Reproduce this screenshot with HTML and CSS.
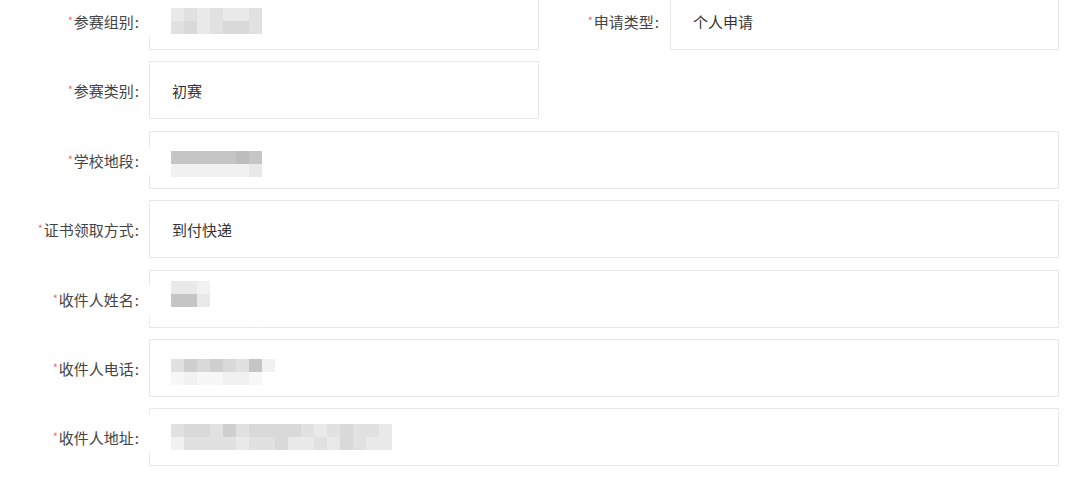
FILE: index.html
```html
<!DOCTYPE html>
<html lang="zh-CN">
<head>
<meta charset="utf-8">
<title>报名信息</title>
<link rel="stylesheet" href="styles.css">
</head>
<body>
<div class="form">
  <div class="row">
    <div class="field first">
      <label class="lbl"><span class="req">*</span>参赛组别<span class="colon">:</span></label>
      <div class="box blobbed b1">
        <div class="mosaic c7">
          <i class="s2"></i><i class="s3"></i><i class="s2"></i><i class="s3"></i><i class="s2"></i><i class="s2"></i><i class="s3"></i>
          <i class="s3"></i><i class="s4"></i><i class="s2"></i><i class="s3"></i><i class="s4"></i><i class="s4"></i><i class="s3"></i>
        </div>
      </div>
    </div>
    <div class="field second">
      <label class="lbl"><span class="req">*</span>申请类型<span class="colon">:</span></label>
      <div class="box">个人申请</div>
    </div>
  </div>

  <div class="row">
    <div class="field first">
      <label class="lbl"><span class="req">*</span>参赛类别<span class="colon">:</span></label>
      <div class="box">初赛</div>
    </div>
  </div>

  <div class="row">
    <div class="field full">
      <label class="lbl"><span class="req">*</span>学校地段<span class="colon">:</span></label>
      <div class="box blobbed b3">
        <div class="mosaic c7 down">
          <i class="s6"></i><i class="s6"></i><i class="s6"></i><i class="s6"></i><i class="s6"></i><i class="s7"></i><i class="s6"></i>
          <i class="s1"></i><i class="s1"></i><i class="s1"></i><i class="s1"></i><i class="s1"></i><i class="s1"></i><i class="s2"></i>
        </div>
      </div>
    </div>
  </div>

  <div class="row">
    <div class="field full">
      <label class="lbl"><span class="req">*</span>证书领取方式<span class="colon">:</span></label>
      <div class="box">到付快递</div>
    </div>
  </div>

  <div class="row">
    <div class="field full">
      <label class="lbl"><span class="req">*</span>收件人姓名<span class="colon">:</span></label>
      <div class="box blobbed b5">
        <div class="mosaic c3 up">
          <i class="s2"></i><i class="s2"></i><i class="s1"></i>
          <i class="s6"></i><i class="s6"></i><i class="s2"></i>
        </div>
      </div>
    </div>
  </div>

  <div class="row">
    <div class="field full">
      <label class="lbl"><span class="req">*</span>收件人电话<span class="colon">:</span></label>
      <div class="box blobbed b6">
        <div class="mosaic c8 down">
          <i class="s3"></i><i class="s5"></i><i class="s4"></i><i class="s5"></i><i class="s4"></i><i class="s3"></i><i class="s6"></i><i class="s1"></i>
          <i class="s0"></i><i class="s1"></i><i class="s0"></i><i class="s0"></i><i class="s1"></i><i class="s1"></i><i class="s0"></i><i class="sw"></i>
        </div>
      </div>
    </div>
  </div>

  <div class="row">
    <div class="field full">
      <label class="lbl"><span class="req">*</span>收件人地址<span class="colon">:</span></label>
      <div class="box blobbed b7">
        <div class="mosaic c17">
          <i class="s3"></i><i class="s4"></i><i class="s4"></i><i class="s3"></i><i class="s5"></i><i class="s3"></i><i class="s4"></i><i class="s4"></i><i class="s4"></i><i class="s4"></i><i class="s3"></i><i class="s2"></i><i class="s3"></i><i class="s4"></i><i class="s3"></i><i class="s3"></i><i class="s2"></i>
          <i class="s1"></i><i class="s3"></i><i class="s3"></i><i class="s3"></i><i class="s3"></i><i class="s2"></i><i class="s3"></i><i class="s3"></i><i class="s4"></i><i class="s2"></i><i class="s2"></i><i class="s3"></i><i class="s2"></i><i class="s4"></i><i class="s3"></i><i class="s2"></i><i class="s2"></i>
        </div>
      </div>
    </div>
  </div>
</div>
</body>
</html>
```

FILE: styles.css
```css
html, body {
  margin: 0;
  padding: 0;
  background: #ffffff;
}

body {
  font-family: "Noto Sans CJK SC", "Noto Sans", "Liberation Sans", sans-serif;
  font-size: 15px;
  color: #333333;
  overflow: hidden;
}

.form {
  width: 1059px;
  display: flex;
  flex-direction: column;
  gap: 11.4px;
  margin-top: -8px;
}

.row {
  display: flex;
}

.field {
  display: flex;
  align-items: center;
}

.field.first { width: 539px; }
.field.second { flex: 1; }
.field.full { flex: 1; }

.lbl {
  flex: none;
  width: 149px;
  box-sizing: border-box;
  padding-right: 10px;
  text-align: right;
  color: #444444;
  white-space: nowrap;
  line-height: 20px;
}

.field.second .lbl { width: 131px; padding-right: 11px; }

.colon {
  margin-left: 1px;
}

.req {
  color: #f56c6c;
  font-size: 11px;
  margin-right: 1px;
  vertical-align: 3px;
}

.box {
  flex: 1;
  height: 58px;
  box-sizing: border-box;
  border: 1px solid #e9e9e9;
  padding-left: 22px;
  display: flex;
  align-items: center;
  color: #333333;
  position: relative;
}

.field.first .box { flex: none; width: 390px; }

.mosaic {
  display: grid;
  grid-auto-rows: 13px;
  margin-left: -1px;
  position: relative;
  z-index: 1;
}
.mosaic.c3 { grid-template-columns: repeat(3, 13px); }
.mosaic.c7 { grid-template-columns: repeat(7, 13px); }
.mosaic.c8 { grid-template-columns: repeat(8, 13px); }
.mosaic.c17 { grid-template-columns: repeat(17, 13px); }
.mosaic.down { margin-top: 9px; }
.mosaic.up { margin-bottom: 9px; }

.mosaic i { display: block; }
.sw { background: #ffffff; }
.s0 { background: #f7f7f7; }
.s1 { background: #f1f1f1; }
.s2 { background: #e9e9e9; }
.s3 { background: #e1e1e1; }
.s4 { background: #d9d9d9; }
.s5 { background: #cfcfcf; }
.s6 { background: #c5c5c5; }
.s7 { background: #bdbdbd; }

/* soft white mask left over the blurred values, covering the field edge */
.blobbed::before {
  content: "";
  position: absolute;
  background: #ffffff;
  border-radius: 18px;
  box-shadow: 0 0 2px rgba(0, 0, 0, 0.015);
}
.b1::before { left: -6px; top: 0; width: 160px; height: 48px; }
.b3::before { left: -5px; top: 9px; width: 190px; height: 40px; }
.b5::before { left: -5px; top: 9px; width: 120px; height: 44px; }
.b6::before { left: 6px; top: 5px; width: 170px; height: 44px; }
.b7::before { left: -7px; top: 2px; width: 260px; height: 46px; }
```
